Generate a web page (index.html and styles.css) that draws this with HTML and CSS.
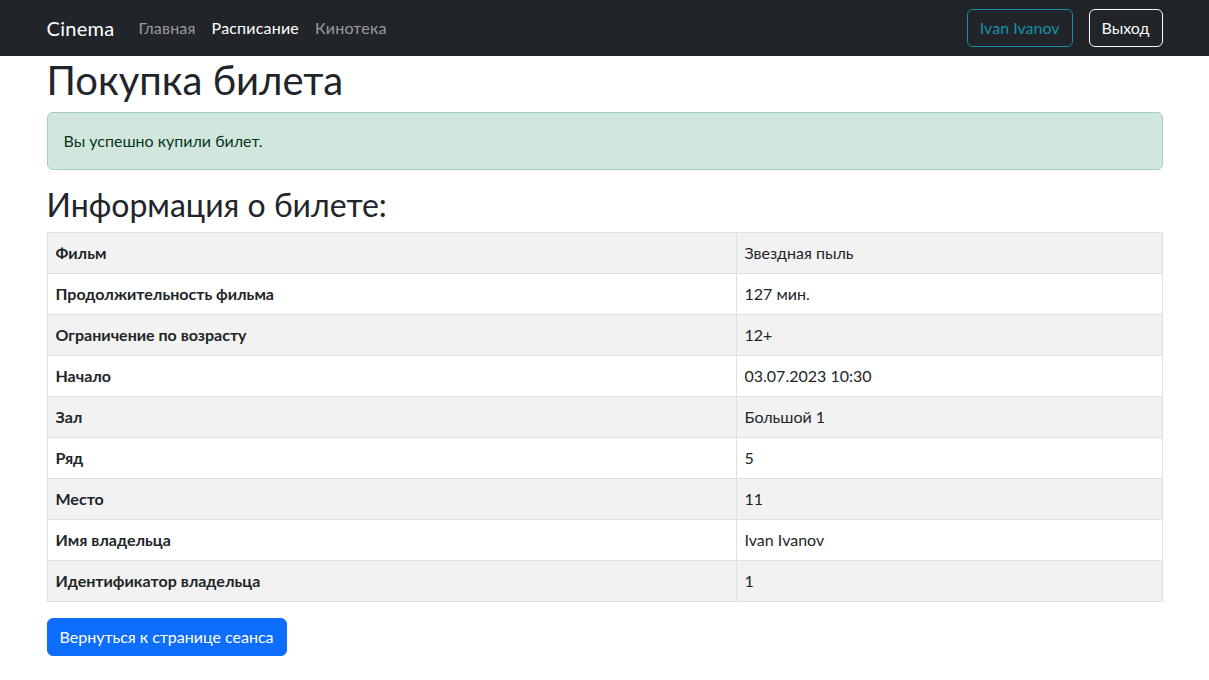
FILE: index.html
```html
<!DOCTYPE html>
<html lang="ru">
<head>
<meta charset="utf-8">
<title>Покупка билета</title>
<link rel="stylesheet" href="styles.css">
</head>
<body>
<nav class="navbar">
  <div class="container nav-inner">
    <a class="brand" href="#">Cinema</a>
    <ul class="nav-links">
      <li><a class="nav-link" href="#">Главная</a></li>
      <li><a class="nav-link active" href="#">Расписание</a></li>
      <li><a class="nav-link" href="#">Кинотека</a></li>
    </ul>
    <div class="nav-actions">
      <a class="btn btn-outline-info" href="#">Ivan Ivanov</a>
      <a class="btn btn-outline-light" href="#">Выход</a>
    </div>
  </div>
</nav>
<main class="container">
  <h1 class="title">Покупка билета</h1>
  <div class="alert">Вы успешно купили билет.</div>
  <h2 class="subtitle">Информация о билете:</h2>
  <table class="info-table">
    <colgroup><col class="col-key"><col class="col-val"></colgroup>
    <tbody>
      <tr><th>Фильм</th><td>Звездная пыль</td></tr>
      <tr><th>Продолжительность фильма</th><td>127 мин.</td></tr>
      <tr><th>Ограничение по возрасту</th><td>12+</td></tr>
      <tr><th>Начало</th><td>03.07.2023 10:30</td></tr>
      <tr><th>Зал</th><td>Большой 1</td></tr>
      <tr><th>Ряд</th><td>5</td></tr>
      <tr><th>Место</th><td>11</td></tr>
      <tr><th>Имя владельца</th><td>Ivan Ivanov</td></tr>
      <tr><th>Идентификатор владельца</th><td>1</td></tr>
    </tbody>
  </table>
  <a class="btn btn-primary" href="#">Вернуться к странице сеанса</a>
</main>
</body>
</html>
```
FILE: styles.css
```css
* { box-sizing: border-box; }
body {
  margin: 0;
  font-family: Lato, "Noto Sans", sans-serif;
  font-size: 16px;
  line-height: 1.5;
  color: #212529;
  background: #fff;
}
a { text-decoration: none; }
.container {
  max-width: 1140px;
  margin: 0 auto;
  padding: 0 12px;
}
.navbar {
  background: #212529;
  padding: 8px 0;
}
.nav-inner {
  display: flex;
  align-items: center;
}
.brand {
  font-size: 20px;
  line-height: 30px;
  padding: 5px 0;
  margin-right: 16px;
  color: #fff;
  letter-spacing: 0.3px;
}
.nav-links {
  display: flex;
  list-style: none;
  margin: 0;
  padding: 0;
  flex: 1;
}
.nav-link {
  display: block;
  padding: 8px 8px;
  color: rgba(255, 255, 255, 0.55);
  letter-spacing: 0.2px;
}
.nav-link.active { color: #fff; }
.nav-actions {
  display: flex;
  gap: 16px;
}
.btn {
  display: inline-block;
  padding: 6px 12px;
  font-size: 16px;
  line-height: 24px;
  border: 1px solid transparent;
  border-radius: 6px;
}
.btn-outline-info {
  color: #1592a6;
  border-color: #1592a6;
}
.btn-outline-light {
  color: #f8f9fa;
  border-color: #f8f9fa;
}
.btn-primary {
  color: #fff;
  background: #0d6efd;
  border-color: #0d6efd;
}
.title {
  font-size: 40px;
  font-weight: 400;
  line-height: 1.2;
  margin: 0 0 8px;
}
.alert {
  padding: 16px;
  margin-bottom: 16px;
  border: 1px solid #a3cfbb;
  border-radius: 6px;
  background: #d1e7dd;
  color: #0a3622;
}
.subtitle {
  font-size: 32px;
  font-weight: 400;
  line-height: 1.2;
  margin: 0 0 8px;
}
.info-table {
  width: 100%;
  border-collapse: collapse;
  margin-bottom: 16px;
  table-layout: fixed;
}
.col-key { width: 689px; }
.info-table th,
.info-table td {
  padding: 8px;
  border: 1px solid #dee2e6;
  text-align: left;
  vertical-align: top;
}
.info-table th { font-weight: 700; }
.info-table tr:nth-child(odd) th,
.info-table tr:nth-child(odd) td { background: #f2f2f2; }
```
